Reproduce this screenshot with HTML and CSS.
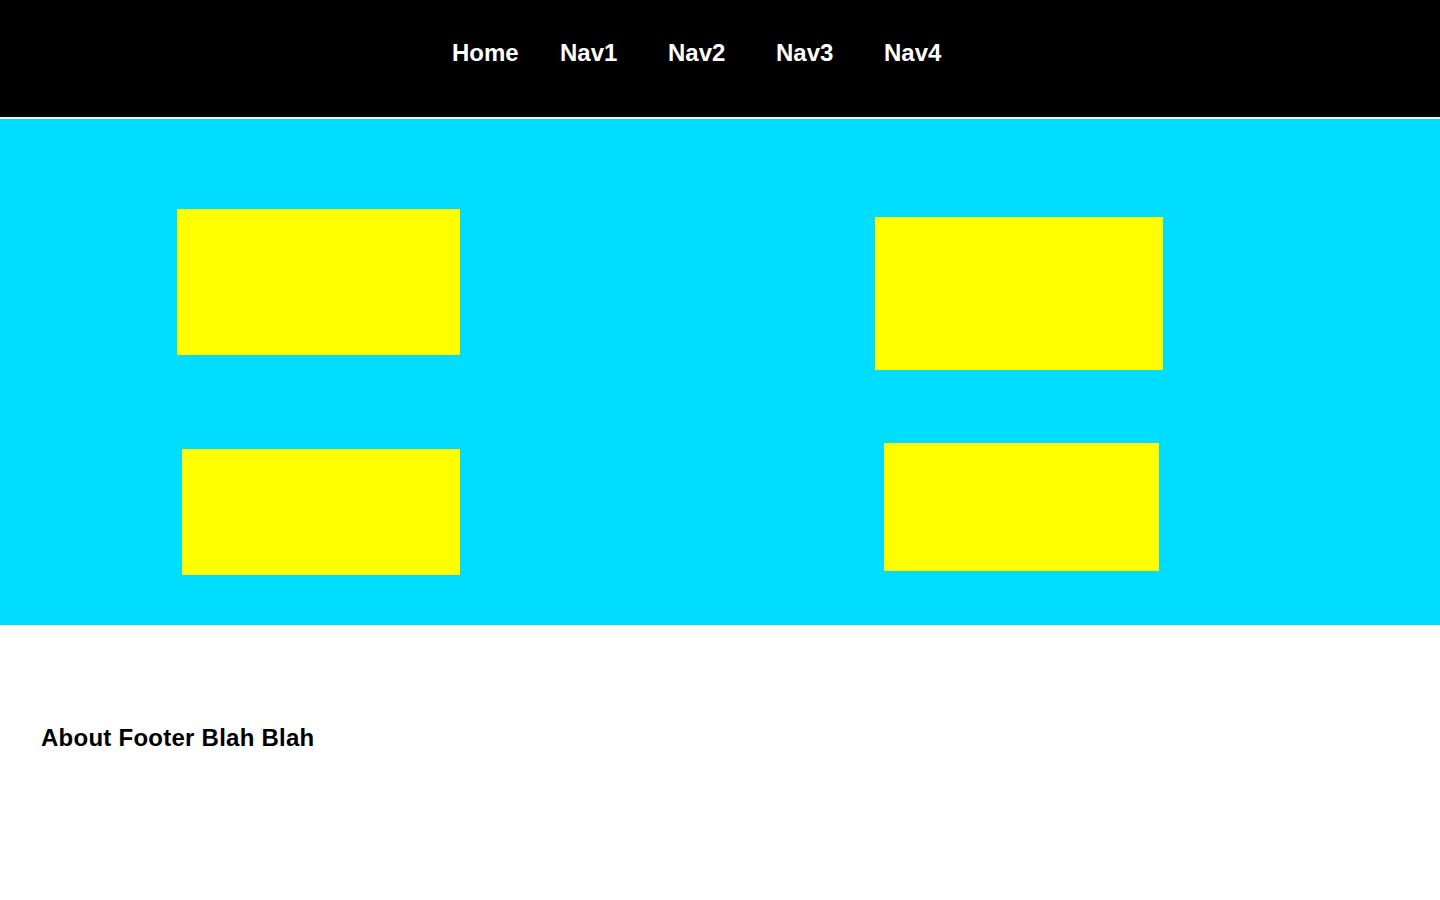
FILE: index.html
```html
<!DOCTYPE html>
<html lang="en">
<head>
<meta charset="utf-8">
<title>Layout</title>
<link rel="stylesheet" href="styles.css">
</head>
<body>
<header class="site-header">
  <nav>
    <ul class="nav-list">
      <li class="nav-item">Home</li>
      <li class="nav-item">Nav1</li>
      <li class="nav-item">Nav2</li>
      <li class="nav-item">Nav3</li>
      <li class="nav-item">Nav4</li>
    </ul>
  </nav>
</header>
<main class="hero">
  <div class="box box-a"></div>
  <div class="box box-b"></div>
  <div class="box box-c"></div>
  <div class="box box-d"></div>
</main>
<footer class="site-footer">
  <h3 class="footer-title">About Footer Blah Blah</h3>
</footer>
</body>
</html>
```
FILE: styles.css
```css
* { box-sizing: border-box; }
html, body { margin: 0; padding: 0; background: #ffffff; }
body { font-family: "Liberation Sans", Arial, sans-serif; }

.site-header {
  height: 119px;
  background: #000000;
  border-bottom: 2px solid #ffffff;
  padding-top: 39px;
}
.nav-list {
  list-style: none;
  margin: 0;
  padding: 0 0 0 4px;
  display: flex;
  justify-content: center;
}
.nav-item {
  width: 108px;
  color: #ffffff;
  font-size: 24px;
  font-weight: bold;
  line-height: 28px;
}

.hero {
  height: 506px;
  background: rgb(0, 221, 255);
  display: grid;
  grid-template-columns: 720px 720px;
  grid-template-rows: 300px 206px;
  align-items: start;
  justify-items: start;
}
.box { background: #ffff00; }
.box-a { width: 283px; height: 146px; margin: 90px 0 0 177px; }
.box-b { width: 288px; height: 153px; margin: 98px 0 0 155px; }
.box-c { width: 278px; height: 126px; margin: 30px 0 0 182px; }
.box-d { width: 275px; height: 128px; margin: 24px 0 0 164px; }

.site-footer {
  padding: 99px 40px 0 41px;
  height: 275px;
}
.footer-title {
  margin: 0;
  font-size: 24px;
  line-height: 28px;
  font-weight: bold;
  letter-spacing: 0.25px;
  color: #000000;
}
```
